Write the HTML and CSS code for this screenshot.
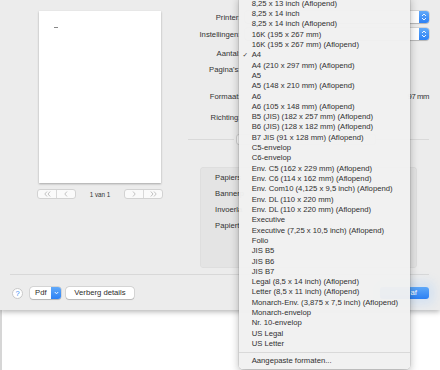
FILE: index.html
```html
<!DOCTYPE html>
<html lang="nl">

<head>
    <meta charset="UTF-8">
    <meta name="viewport" content="width=device-width, initial-scale=1.0">
    <title>Afdrukken</title>
    <link rel="stylesheet" href="styles.css">
</head>

<body>
    <div class="dialog">
        <div class="main">
            <!-- preview column -->
            <div class="preview">
                <div class="paper"><span class="paper-mark"></span></div>
                <div class="pager">
                    <div class="seg">
                        <span class="seg-btn">
                            <svg width="7" height="6" viewBox="0 0 7 6"><polyline points="3,0.5 0.8,3 3,5.5" /><polyline points="6.2,0.5 4,3 6.2,5.5" /></svg>
                        </span>
                        <span class="seg-btn">
                            <svg width="4" height="6" viewBox="0 0 4 6"><polyline points="3,0.5 0.8,3 3,5.5" /></svg>
                        </span>
                    </div>
                    <span class="page-count">1 van 1</span>
                    <div class="seg">
                        <span class="seg-btn">
                            <svg width="4" height="6" viewBox="0 0 4 6"><polyline points="1,0.5 3.2,3 1,5.5" /></svg>
                        </span>
                        <span class="seg-btn">
                            <svg width="7" height="6" viewBox="0 0 7 6"><polyline points="0.8,0.5 3,3 0.8,5.5" /><polyline points="4,0.5 6.2,3 4,5.5" /></svg>
                        </span>
                    </div>
                </div>
            </div>

            <!-- settings column (controls mostly hidden behind the open menu) -->
            <div class="settings">
                <div class="row row-printer">
                    <span class="label">Printer:</span>
                    <div class="popup"><span class="popup-text"></span><span class="popup-arrows">
                        <svg width="6" height="8" viewBox="0 0 6 8"><polyline points="1,3 3,1 5,3" /><polyline points="1,5 3,7 5,5" /></svg>
                    </span></div>
                </div>
                <div class="row row-presets">
                    <span class="label">Instellingen:</span>
                    <div class="popup"><span class="popup-text"></span><span class="popup-arrows">
                        <svg width="6" height="8" viewBox="0 0 6 8"><polyline points="1,3 3,1 5,3" /><polyline points="1,5 3,7 5,5" /></svg>
                    </span></div>
                </div>
                <div class="row row-copies">
                    <span class="label">Aantal:</span>
                    <span class="value"></span>
                </div>
                <div class="row row-pages">
                    <span class="label">Pagina's:</span>
                    <span class="value"></span>
                </div>
                <div class="row row-size">
                    <span class="label">Formaat:</span>
                    <span class="value value-right">97 mm</span>
                </div>
                <div class="row row-orientation">
                    <span class="label">Richting:</span>
                    <span class="value"></span>
                </div>

                <div class="section-divider">
                    <span class="line line-left"></span>
                    <span class="section-popup"></span>
                    <span class="line"></span>
                </div>

                <div class="group">
                    <div class="group-row">Papiers</div>
                    <div class="group-row">Bannerp</div>
                    <div class="group-row">Invoerla</div>
                    <div class="group-row">Papiert</div>
                </div>
            </div>
        </div>

        <div class="footer">
            <span class="help">?</span>
            <div class="pdf-popup"><span class="pdf-text">Pdf</span><span class="pdf-arrow">
                <svg width="5" height="4" viewBox="0 0 5 4"><polyline points="0.8,1 2.5,2.8 4.2,1" /></svg>
            </span></div>
            <button class="btn">Verberg details</button>
            <span class="spacer"></span>
            <button class="btn btn-primary">af</button>
        </div>
    </div>

    <!-- open paper size menu -->
    <ul class="menu">
        <li>8,25 x 13 inch (Aflopend)</li>
        <li>8,25 x 14 inch</li>
        <li>8,25 x 14 inch (Aflopend)</li>
        <li>16K (195 x 267 mm)</li>
        <li>16K (195 x 267 mm) (Aflopend)</li>
        <li class="checked">A4</li>
        <li>A4 (210 x 297 mm) (Aflopend)</li>
        <li>A5</li>
        <li>A5 (148 x 210 mm) (Aflopend)</li>
        <li>A6</li>
        <li>A6 (105 x 148 mm) (Aflopend)</li>
        <li>B5 (JIS) (182 x 257 mm) (Aflopend)</li>
        <li>B6 (JIS) (128 x 182 mm) (Aflopend)</li>
        <li>B7 JIS (91 x 128 mm) (Aflopend)</li>
        <li>C5-envelop</li>
        <li>C6-envelop</li>
        <li>Env. C5 (162 x 229 mm) (Aflopend)</li>
        <li>Env. C6 (114 x 162 mm) (Aflopend)</li>
        <li>Env. Com10 (4,125 x 9,5 inch) (Aflopend)</li>
        <li>Env. DL (110 x 220 mm)</li>
        <li>Env. DL (110 x 220 mm) (Aflopend)</li>
        <li>Executive</li>
        <li>Executive (7,25 x 10,5 inch) (Aflopend)</li>
        <li>Folio</li>
        <li>JIS B5</li>
        <li>JIS B6</li>
        <li>JIS B7</li>
        <li>Legal (8,5 x 14 inch) (Aflopend)</li>
        <li>Letter (8,5 x 11 inch) (Aflopend)</li>
        <li>Monarch-Env. (3,875 x 7,5 inch) (Aflopend)</li>
        <li>Monarch-envelop</li>
        <li>Nr. 10-envelop</li>
        <li>US Legal</li>
        <li>US Letter</li>
        <li class="separator"></li>
        <li>Aangepaste formaten...</li>
    </ul>
</body>

</html>
```

FILE: styles.css
```css
body {
    margin: 0;
    width: 440px;
    height: 370px;
    overflow: hidden;
    position: relative;
    font-family: "Liberation Sans", Arial, sans-serif;
    font-size: 7.7px;
    color: #2b2b2b;
    background: linear-gradient(to right, #d6d6d6 0 2px, #fff 2px);
}

.dialog {
    height: 310px;
    background-color: #ececec;
    box-shadow: 0 2px 5px rgba(0, 0, 0, 0.28);
    display: flex;
    flex-direction: column;
}

.main {
    height: 274px;
    display: flex;
}

/* preview */

.preview {
    width: 188px;
    flex-shrink: 0;
}

.paper {
    margin: 11px 0 0 39px;
    width: 122px;
    height: 172px;
    background: #fff;
    box-shadow: 0 1px 2px rgba(0, 0, 0, 0.3);
    position: relative;
}

.paper-mark {
    position: absolute;
    left: 15px;
    top: 16px;
    width: 4px;
    height: 1px;
    background: #888;
}

.pager {
    margin: 6px 0 0 37px;
    width: 126px;
    height: 10px;
    display: flex;
    justify-content: space-between;
    align-items: center;
}

.seg {
    width: 39px;
    height: 10px;
    box-sizing: border-box;
    border: 1px solid #d2d2d2;
    border-radius: 3px;
    background: #fafafa;
    display: flex;
}

.seg-btn {
    flex: 1;
    display: flex;
    align-items: center;
    justify-content: center;
}

.seg-btn + .seg-btn {
    border-left: 1px solid #d8d8d8;
}

.seg-btn svg polyline {
    fill: none;
    stroke: #b4b4b4;
    stroke-width: 0.8;
}

.page-count {
    font-size: 6.3px;
    color: #333;
}

/* settings */

.settings {
    width: 241px;
    display: flex;
    flex-direction: column;
}

.row {
    height: 12px;
    display: grid;
    grid-template-columns: 52.5px 1fr;
    column-gap: 4.5px;
    align-items: center;
}

.label {
    text-align: right;
    white-space: nowrap;
    color: #333;
}

.row-printer { margin-top: 11px; }
.row-presets { margin-top: 5px; }
.row-copies { margin-top: 7px; }
.row-pages { margin-top: 4px; }
.row-size { margin-top: 15px; }
.row-orientation { margin-top: 9px; }

.value-right {
    text-align: right;
    letter-spacing: -0.4px;
    color: #333;
}

.popup {
    height: 12px;
    display: flex;
    border-radius: 3px;
    background: #fff;
    box-shadow: 0 0 0 0.5px rgba(0, 0, 0, 0.18), 0 0.5px 1px rgba(0, 0, 0, 0.15);
    overflow: hidden;
}

.popup-text {
    flex: 1;
}

.popup-arrows {
    width: 10px;
    background: linear-gradient(#62aaf9, #2c81f5);
    display: flex;
    align-items: center;
    justify-content: center;
}

.popup-arrows svg polyline,
.pdf-arrow svg polyline {
    fill: none;
    stroke: #fff;
    stroke-width: 0.9;
}

.section-divider {
    margin-top: 11px;
    height: 11px;
    display: flex;
    align-items: center;
}

.line {
    flex: 1;
    height: 1px;
    background: #d9d9d9;
}

.line-left {
    flex: none;
    width: 46px;
    margin-right: 2px;
}

.section-popup {
    width: 140px;
    height: 11px;
    box-sizing: border-box;
    border-radius: 3px;
    background: #fbfbfb;
    border: 1px solid #cfcfcf;
}

.group {
    margin: 22px 12px 0 12px;
    height: 101px;
    box-sizing: border-box;
    padding: 5px 0 0 15px;
    background: #e4e4e4;
    border-radius: 4px;
    box-shadow: inset 0 0 0 0.5px rgba(0, 0, 0, 0.05);
    display: flex;
    flex-direction: column;
    gap: 4px;
}

.group-row {
    height: 12px;
    line-height: 12px;
    color: #333;
}

/* footer */

.footer {
    margin: 0 11px 0 10px;
    border-top: 1px solid #d8d8d8;
    padding: 12px 0 11px 2px;
    display: flex;
    align-items: center;
    height: 12px;
}

.help {
    width: 11px;
    height: 11px;
    box-sizing: border-box;
    border-radius: 50%;
    border: 1px solid #c8c8c8;
    background: #fff;
    color: #3a8af2;
    font-size: 7.5px;
    line-height: 9px;
    text-align: center;
}

.pdf-popup {
    margin-left: 7px;
    width: 31px;
    height: 12px;
    display: flex;
    border-radius: 3px;
    background: #fff;
    box-shadow: 0 0 0 0.5px rgba(0, 0, 0, 0.18), 0 0.5px 1px rgba(0, 0, 0, 0.15);
    overflow: hidden;
}

.pdf-text {
    flex: 1;
    padding-left: 5px;
    line-height: 12px;
}

.pdf-arrow {
    width: 10px;
    background: linear-gradient(#62aaf9, #2c81f5);
    display: flex;
    align-items: center;
    justify-content: center;
}

.btn {
    margin: 0 0 0 5px;
    height: 12px;
    padding: 0 7px;
    border: none;
    border-radius: 3px;
    background: #fff;
    box-shadow: 0 0 0 0.5px rgba(0, 0, 0, 0.18), 0 0.5px 1px rgba(0, 0, 0, 0.15);
    font-family: inherit;
    font-size: 7.7px;
    color: #2b2b2b;
    line-height: 12px;
}

.footer .btn:nth-of-type(1) {
    width: 68px;
}

.spacer {
    flex: 1;
}

.btn-primary {
    width: 49px;
    padding: 0 12px 0 0;
    text-align: right;
    color: #fff;
    background: linear-gradient(#5ea8f8, #2c80f4);
    box-shadow: 0 0 10px 6px rgba(150, 200, 255, 0.25);
}

/* paper size menu */

.menu {
    position: absolute;
    left: 239px;
    top: -4px;
    width: 171px;
    margin: 0;
    padding: 2.7px 0;
    list-style: none;
    background: rgba(241, 241, 241, 0.97);
    border-radius: 0 0 4px 4px;
    box-shadow: 0 0 0 0.5px rgba(0, 0, 0, 0.15), 0 3px 9px rgba(0, 0, 0, 0.28);
}

.menu li {
    position: relative;
    height: 10.32px;
    line-height: 10.32px;
    padding-left: 12.7px;
    white-space: nowrap;
    color: #303030;
}

.menu li.checked::before {
    content: "\2713";
    position: absolute;
    left: 3.5px;
    top: 0;
    font-family: "DejaVu Sans", sans-serif;
    font-size: 6.5px;
}

.menu li.separator {
    height: 6.5px;
    padding: 0;
}

.menu li.separator::after {
    content: "";
    position: absolute;
    left: 0;
    right: 0;
    top: 3px;
    height: 1px;
    background: #d9d9d9;
}
```
